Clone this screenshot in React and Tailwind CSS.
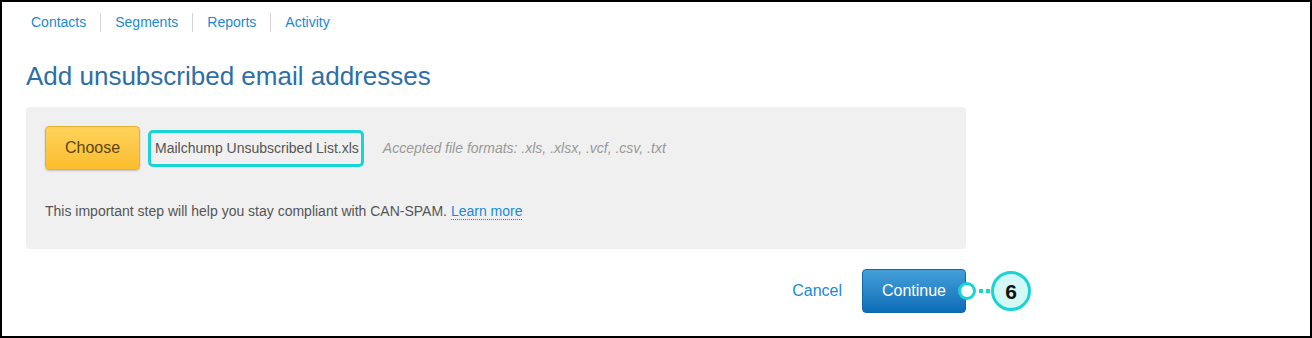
import React from 'react';

const navItems = ['Contacts', 'Segments', 'Reports', 'Activity'];

const App = () => {
  return (
    <div className="w-[1312px] h-[338px] bg-white border-2 border-black overflow-hidden" style={{ fontFamily: '"Liberation Sans", Arial, sans-serif' }}>
      {/* Top nav */}
      <div className="flex items-center pl-[29px] pt-[10px]">
        {navItems.map((item, i) => (
          <div key={item} className="flex items-center">
            {i > 0 && <div className="w-px h-[19px] bg-[#d4d4d4] mx-[14px]"></div>}
            <span className="text-[14px] leading-[20px] text-[#1a8ad4]">{item}</span>
          </div>
        ))}
      </div>

      <div className="pl-[24px] w-[964px]">
        <h1 className="mt-[28px] text-[26px] leading-[32px] text-[#2d6fa6]">Add unsubscribed email addresses</h1>

        {/* Upload panel */}
        <div className="mt-[15px] bg-[#f0f0f0] rounded-[4px] h-[142px] pl-[19px] pt-[19px]">
          <div className="flex items-center">
            <button className="w-[95px] h-[44px] rounded-[4px] border border-[#e6b12e] bg-gradient-to-b from-[#fed35a] to-[#fbbd2b] text-[16px] text-[#5b4411] shadow-[0_1px_2px_rgba(0,0,0,0.2)]">Choose</button>
            <div className="ml-[8px] h-[37px] pl-[4px] pr-[2px] flex items-center border-[3px] border-[#19d4d4] rounded-[5px] text-[14px] text-[#555]">Mailchump Unsubscribed List.xls</div>
            <span className="ml-[19px] text-[14px] italic text-[#999]">Accepted file formats: .xls, .xlsx, .vcf, .csv, .txt</span>
          </div>
          <p className="mt-[31px] text-[14px] text-[#555]">
            This important step will help you stay compliant with CAN-SPAM.{' '}
            <span className="text-[#1a8ad4] border-b border-dotted border-[#1a8ad4]">Learn more</span>
          </p>
        </div>

        {/* Actions */}
        <div className="mt-[20px] flex items-center justify-end">
          <span className="text-[16px] text-[#1a8ad4] mr-[20px]">Cancel</span>
          <div className="relative">
            <button className="w-[104px] h-[44px] rounded-[4px] bg-gradient-to-b from-[#439fd9] to-[#0b6db7] text-white text-[16px] border border-[#0d68ad]">Continue</button>

            {/* Callout marker */}
            <svg className="absolute left-[95px] top-0" width="80" height="44" viewBox="0 0 80 44">
              <line x1="22" y1="22" x2="42" y2="22" stroke="#19d4d4" strokeWidth="4" strokeDasharray="4 3" />
              <circle cx="10" cy="22" r="7.5" fill="white" stroke="#19d4d4" strokeWidth="3" />
              <circle cx="54" cy="22" r="18.5" fill="#d3f8f5" stroke="#19d4d4" strokeWidth="3" />
              <text x="54" y="29.5" textAnchor="middle" fontSize="21" fontWeight="bold" fill="#111" fontFamily="Liberation Sans, Arial, sans-serif">6</text>
            </svg>
          </div>
        </div>
      </div>
    </div>
  );
};

export default App;
